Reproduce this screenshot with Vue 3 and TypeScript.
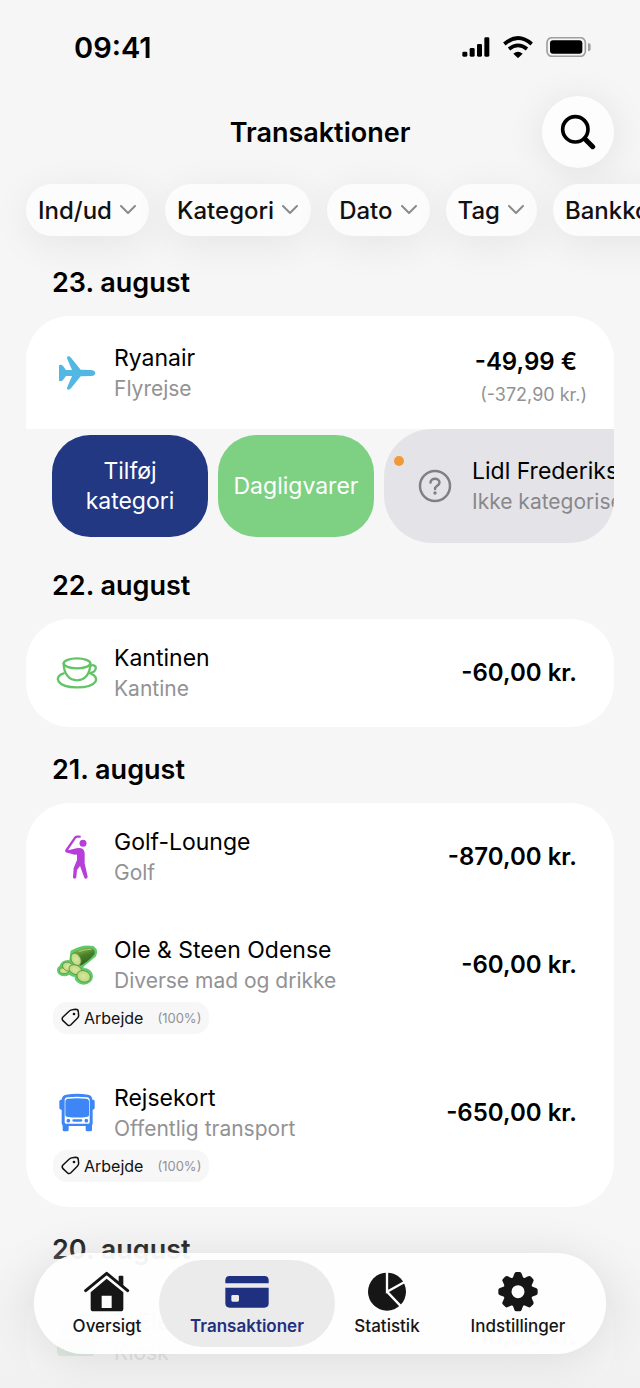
<script setup lang="ts">
import { ref } from 'vue'

type IconName = 'plane' | 'cup' | 'golf' | 'cucumber' | 'bus' | 'kiosk'
type TabId = 'home' | 'card' | 'pie' | 'gear'

interface Tag {
  name: string
  share: string
}

interface Transaction {
  id: number
  icon: IconName
  title: string
  category: string
  amount: string
  converted?: string
  tag?: Tag
}

interface DayGroup {
  date: string
  items: Transaction[]
  swiped?: { title: string; category: string; actions: { label: string; kind: string }[] }
}

const filters: string[] = ['Ind/ud', 'Kategori', 'Dato', 'Tag', 'Bankkonto']

const groups: DayGroup[] = [
  {
    date: '23. august',
    items: [
      { id: 1, icon: 'plane', title: 'Ryanair', category: 'Flyrejse', amount: '-49,99 €', converted: '(-372,90 kr.)' },
    ],
    swiped: {
      title: 'Lidl Frederiksberg',
      category: 'Ikke kategoriseret',
      actions: [
        { label: 'Tilføj kategori', kind: 'add' },
        { label: 'Dagligvarer', kind: 'suggest' },
      ],
    },
  },
  {
    date: '22. august',
    items: [{ id: 2, icon: 'cup', title: 'Kantinen', category: 'Kantine', amount: '-60,00 kr.' }],
  },
  {
    date: '21. august',
    items: [
      { id: 3, icon: 'golf', title: 'Golf-Lounge', category: 'Golf', amount: '-870,00 kr.' },
      {
        id: 4,
        icon: 'cucumber',
        title: 'Ole & Steen Odense',
        category: 'Diverse mad og drikke',
        amount: '-60,00 kr.',
        tag: { name: 'Arbejde', share: '(100%)' },
      },
      {
        id: 5,
        icon: 'bus',
        title: 'Rejsekort',
        category: 'Offentlig transport',
        amount: '-650,00 kr.',
        tag: { name: 'Arbejde', share: '(100%)' },
      },
    ],
  },
  {
    date: '20. august',
    items: [{ id: 6, icon: 'kiosk', title: '7-Eleven', category: 'Kiosk', amount: '-10,00 kr.' }],
  },
]

const tabs: { id: TabId; label: string }[] = [
  { id: 'home', label: 'Oversigt' },
  { id: 'card', label: 'Transaktioner' },
  { id: 'pie', label: 'Statistik' },
  { id: 'gear', label: 'Indstillinger' },
]

const activeTab = ref<TabId>('card')
const toothAngles: number[] = [0, 45, 90, 135, 180, 225, 270, 315]
</script>

<template>
  <div class="screen">
    <div class="status">
      <span class="clock">09:41</span>
      <div class="status-icons">
        <svg width="28" height="20" viewBox="0 0 84 60" aria-hidden="true">
          <rect x="1" y="44" width="15" height="15" rx="4" />
          <rect x="23" y="33" width="15" height="26" rx="4" />
          <rect x="45" y="21" width="15" height="38" rx="4" />
          <rect x="67" y="1" width="15" height="58" rx="4" />
        </svg>
        <svg width="30" height="22" viewBox="0 0 90 66" aria-hidden="true">
          <path d="M4 24Q45 -12 86 24" fill="none" stroke="#000" stroke-width="11" />
          <path d="M18 39Q45 17 72 39" fill="none" stroke="#000" stroke-width="11" />
          <path d="M31 53Q45 41 59 53L48 64Q45 67 42 64Z" />
        </svg>
        <svg width="46" height="20" viewBox="0 0 138 60" aria-hidden="true">
          <rect x="3" y="2" width="115" height="56" rx="15" fill="none" stroke="#a0a0a0" stroke-width="5" />
          <rect x="12" y="10" width="97" height="40" rx="9" />
          <path d="M126 19H129Q134 19 134 25V36Q134 42 129 42H126Z" fill="#a0a0a0" />
        </svg>
      </div>
    </div>

    <header class="header">
      <h1>Transaktioner</h1>
      <button class="search" type="button" aria-label="Søg">
        <svg width="36" height="36" viewBox="0 0 108 108" fill="none" stroke="#000" stroke-linecap="round">
          <circle cx="46" cy="46" r="38" stroke-width="11" />
          <path d="M75 75L98 98" stroke-width="15" />
        </svg>
      </button>
    </header>

    <nav class="filters" aria-label="Filtre">
      <button v-for="name in filters" :key="name" class="chip" type="button" aria-haspopup="listbox">
        {{ name }}
        <svg width="16" height="10" viewBox="0 0 16 10" aria-hidden="true">
          <path d="M1 1L8 8L15 1" fill="none" stroke="#8b8b8e" stroke-width="2" stroke-linecap="round" stroke-linejoin="round" />
        </svg>
      </button>
    </nav>

    <main class="list">
      <section v-for="group in groups" :key="group.date">
        <h2>{{ group.date }}</h2>
        <div class="card">
          <article v-for="item in group.items" :key="item.id" class="row" :class="{ tall: item.converted }">
            <div class="line">
              <span class="icon">
                <svg v-if="item.icon === 'plane'" width="38" height="36" viewBox="177 313 114 108">
                  <path
                    fill="#53b7e3"
                    d="M180 346Q180 342 184 342Q189 342 192 346L201 358H219L204 323Q203 317 208 317Q213 317 216 321L245 357L277 358Q289 360 289 367Q289 375 277 376L245 377L216 413Q213 417 208 417Q203 417 204 411L219 376H201L192 388Q189 392 184 392Q180 392 180 388Z"
                  />
                </svg>
                <svg
                  v-else-if="item.icon === 'cup'"
                  width="44"
                  height="34"
                  viewBox="44 79 132 102"
                  fill="none"
                  stroke="#62c466"
                  stroke-width="7"
                  stroke-linecap="round"
                >
                  <ellipse cx="110" cy="101" rx="40" ry="15" />
                  <path d="M70 101C70 135 88 152 110 152C132 152 150 135 150 101" />
                  <path d="M151 108C160 104 168 109 166 117C165 126 155 131 146 130" />
                  <path d="M70 131C40 139 46 173 110 173C174 173 178 142 153 133" />
                </svg>
                <svg v-else-if="item.icon === 'golf'" width="26" height="46" viewBox="73 614 78 138" fill="#b63fd9">
                  <circle cx="130" cy="642" r="10.500" />
                  <path d="M120 622H112L107 624L81 662" fill="none" stroke="#b63fd9" stroke-width="7" stroke-linecap="round" stroke-linejoin="round" />
                  <path d="M81 665L104 671" fill="none" stroke="#b63fd9" stroke-width="9" stroke-linecap="round" />
                  <path d="M86 663L110 657Q134 653 135 672V702L144 742Q144 748 138 748Q135 748 134 745L121 710L112 722L110 744Q109 748 105 748Q100 748 100 743L102 716L112 692V676L98 674Z" />
                </svg>
                <svg v-else-if="item.icon === 'cucumber'" width="46" height="44" viewBox="42 70 138 132">
                  <defs>
                    <linearGradient id="peel" x1="0.3" y1="0" x2="0.7" y2="1">
                      <stop offset="0" stop-color="#8cbd52" />
                      <stop offset="0.45" stop-color="#4a7f2a" />
                      <stop offset="1" stop-color="#2f5c1a" />
                    </linearGradient>
                    <radialGradient id="flesh">
                      <stop offset="0" stop-color="#d8e8a6" />
                      <stop offset="0.8" stop-color="#c1db86" />
                      <stop offset="1" stop-color="#96bf58" />
                    </radialGradient>
                  </defs>
                  <g fill="#5fca6e" stroke="#5fca6e" stroke-width="14" stroke-linejoin="round">
                    <path d="M98 98Q130 80 158 86Q168 94 162 106L126 136L94 132Z" />
                    <ellipse cx="73" cy="152" rx="15" ry="11" />
                    <ellipse cx="84" cy="140" rx="17" ry="12" />
                    <ellipse cx="106" cy="150" rx="19" ry="15" />
                    <ellipse cx="131" cy="170" rx="21" ry="18" />
                  </g>
                  <path d="M97 101Q122 82 153 84Q168 90 163 104Q150 122 122 138Z" fill="url(#peel)" />
                  <path d="M116 96Q138 87 155 89" fill="none" stroke="#9cc566" stroke-width="4" />
                  <ellipse cx="108" cy="119" rx="14" ry="20" transform="rotate(-28 108 119)" fill="url(#flesh)" stroke="#5d9235" stroke-width="2" />
                  <g fill="url(#flesh)" stroke="#5d9235" stroke-width="2">
                    <ellipse cx="72" cy="153" rx="14" ry="9" />
                    <ellipse cx="84" cy="141" rx="17" ry="13" transform="rotate(22 84 141)" />
                    <ellipse cx="106" cy="150" rx="20" ry="14" transform="rotate(22 106 150)" />
                    <ellipse cx="131" cy="170" rx="21" ry="17" transform="rotate(22 131 170)" />
                  </g>
                </svg>
                <svg v-else-if="item.icon === 'bus'" width="38" height="40" viewBox="51 523 114 120" fill="#3e86f5">
                  <path
                    fill-rule="evenodd"
                    d="M76 528Q108 523 141 528Q153 530 154 542V543H157Q161 544 161 548V568Q161 572 156 573H155V613Q155 618 153 620V633Q153 638 148 638H139Q134 638 134 633V622H83V633Q83 638 78 638H69Q65 638 65 633V620Q62 618 62 613V573H60Q55 572 55 568V548Q55 544 60 543H62V542Q63 530 76 528ZM79 536Q71 537 71 545V611Q71 615 75 615H142Q146 615 146 611V545Q146 537 138 536Q108 532 79 536Z"
                  />
                  <path d="M81 540Q108 537 136 540Q144 541 144 549V589Q144 593 140 594Q108 599 77 594Q73 593 73 589V549Q73 541 81 540Z" />
                  <circle cx="82" cy="606" r="5.500" />
                  <circle cx="136" cy="606" r="5.500" />
                  <rect x="94" y="602" width="30" height="7" rx="3.500" />
                </svg>
                <svg v-else width="42" height="42" viewBox="0 0 42 42">
                  <path d="M6 20L14 7Q21 0 28 7L38 22" fill="none" stroke="#6fdc96" stroke-width="6" />
                  <rect x="1" y="22" width="38" height="18" rx="4" fill="#7fc795" />
                </svg>
              </span>
              <div class="text">
                <h3>{{ item.title }}</h3>
                <p>{{ item.category }}</p>
              </div>
              <div class="sum">
                <strong>{{ item.amount }}</strong>
                <small v-if="item.converted">{{ item.converted }}</small>
              </div>
            </div>
            <div v-if="item.tag" class="tag">
              <svg width="20" height="20" viewBox="58 266 60 60" aria-hidden="true">
                <path
                  d="M67 293L86 275Q90 271 95 271L105 270Q113 270 113 278L114 288Q114 293 110 297L90 317Q85 321 80 316L67 304Q62 298 67 293Z"
                  fill="none"
                  stroke="#111"
                  stroke-width="4.500"
                />
                <circle cx="100" cy="284" r="4" fill="#111" />
              </svg>
              <span>{{ item.tag.name }}</span>
              <small>{{ item.tag.share }}</small>
            </div>
          </article>

          <div v-if="group.swiped" class="swipe">
            <button
              v-for="action in group.swiped.actions"
              :key="action.kind"
              type="button"
              class="action"
              :class="action.kind"
            >
              {{ action.label }}
            </button>
            <article class="pulled">
              <i class="dot"></i>
              <span class="icon">
                <svg width="34" height="34" viewBox="0 0 34 34" fill="none" stroke="#808084">
                  <circle cx="17" cy="17" r="15" stroke-width="2.500" />
                  <path d="M12.500 13.500C12.500 8.500 21.500 8.500 21.500 13.500C21.500 17 17 16.500 17 20" stroke-width="2.500" stroke-linecap="round" />
                  <circle cx="17" cy="24" r="1.700" fill="#808084" stroke="none" />
                </svg>
              </span>
              <div class="text">
                <h3>{{ group.swiped.title }}</h3>
                <p>{{ group.swiped.category }}</p>
              </div>
            </article>
          </div>
        </div>
      </section>
    </main>

    <div class="fade"></div>

    <nav class="tabbar" aria-label="Hovedmenu">
      <button
        v-for="tab in tabs"
        :key="tab.id"
        type="button"
        class="tab"
        :class="{ active: tab.id === activeTab }"
        @click="activeTab = tab.id"
      >
        <svg v-if="tab.id === 'home'" width="46" height="42" viewBox="252 184 138 126" fill="currentColor">
          <path d="M257 243L320 191L383 243" fill="none" stroke="currentColor" stroke-width="9" stroke-linecap="round" stroke-linejoin="round" />
          <path d="M356 201Q356 198 359 198H367Q370 198 370 201V233L356 221Z" />
          <path fill-rule="evenodd" d="M320 207L370 248V297Q370 305 362 305H280Q272 305 272 297V248ZM305 258V295H335V258Z" />
        </svg>
        <svg v-else-if="tab.id === 'card'" width="46" height="42" viewBox="674 183 138 126" fill="currentColor">
          <path d="M678 220V211Q678 198 691 198H795Q808 198 808 211V220Z" />
          <path
            fill-rule="evenodd"
            d="M678 233H808V280Q808 293 795 293H691Q678 293 678 280ZM700 255Q696 255 696 259V271Q696 275 700 275H715Q719 275 719 271V259Q719 255 715 255Z"
          />
        </svg>
        <svg v-else-if="tab.id === 'pie'" width="46" height="42" viewBox="-69 -62 138 126">
          <circle r="57" fill="currentColor" />
          <path d="M0 -60V0L54 -30M0 0L42 44" fill="none" stroke="#fdfdfd" stroke-width="7" />
        </svg>
        <svg v-else width="46" height="42" viewBox="-69 -62 138 126" fill="currentColor">
          <circle r="32" fill="none" stroke="currentColor" stroke-width="25" />
          <path
            v-for="angle in toothAngles"
            :key="angle"
            :transform="`rotate(${angle})`"
            d="M-17 -38L-11 -54Q-10 -59 -5 -59H5Q10 -59 11 -54L17 -38Z"
          />
        </svg>
        <span>{{ tab.label }}</span>
      </button>
    </nav>
  </div>
</template>

<style>
body {
  margin: 0;
  background: #f6f6f6;
}
</style>

<style scoped>
.screen {
  position: relative;
  height: 100vh;
  overflow: hidden;
  background: #f6f6f6;
  color: #000;
  font-family: Inter, 'Liberation Sans', sans-serif;
}

h1,
h2,
h3,
p {
  margin: 0;
}

button {
  border: 0;
  padding: 0;
  font-family: inherit;
  cursor: pointer;
}

svg {
  display: block;
  flex: none;
}

.status {
  display: flex;
  align-items: center;
  justify-content: space-between;
  height: 96px;
  padding: 0 48px 2px 74px;
  box-sizing: border-box;
}

.clock {
  font-size: 29px;
  font-weight: 600;
}

.status-icons {
  display: flex;
  align-items: center;
  gap: 13px;
}

.header {
  display: grid;
  grid-template-columns: 72px 1fr 72px;
  align-items: center;
  padding: 0 26px;
}

.header h1 {
  grid-column: 2;
  text-align: center;
  font-size: 27px;
  font-weight: 600;
}

.search {
  display: flex;
  align-items: center;
  justify-content: center;
  width: 72px;
  height: 72px;
  border-radius: 50%;
  background: #fdfdfd;
  box-shadow: 0 4px 40px rgba(0, 0, 0, 0.09);
}

.filters {
  display: flex;
  gap: 16px;
  padding: 16px 0 4px 26px;
}

.chip {
  display: flex;
  flex: none;
  align-items: center;
  gap: 8px;
  height: 52px;
  padding: 0 13px 0 12px;
  border-radius: 26px;
  background: #fcfcfc;
  box-shadow: 0 8px 40px rgba(0, 0, 0, 0.07);
  color: #111;
  font-size: 24px;
  font-weight: 500;
  white-space: nowrap;
}

.list {
  padding: 0 26px;
}

h2 {
  padding: 26px 26px 16px;
  font-size: 27px;
  font-weight: 600;
  line-height: 34px;
}

.card {
  overflow: hidden;
  border-radius: 44px;
}

.row {
  padding: 23px 27px;
  background: #fff;
}

.row.tall {
  padding: 18px 27px 17px;
}

.line {
  display: flex;
  align-items: center;
}

.icon {
  display: flex;
  flex: none;
  align-items: center;
  justify-content: center;
  width: 48px;
  margin-right: 13px;
}

.text {
  flex: 1;
  white-space: nowrap;
}

h3 {
  font-size: 23px;
  font-weight: 400;
  line-height: 32px;
}

.text p {
  color: #929294;
  font-size: 21px;
  line-height: 30px;
}

.sum {
  display: flex;
  flex-direction: column;
  align-items: flex-end;
}

.sum strong {
  margin-right: 10px;
  font-size: 24px;
  font-weight: 600;
  line-height: 32px;
}

.tall .sum strong {
  padding-top: 12px;
}

.sum small {
  color: #929294;
  font-size: 18px;
  line-height: 34px;
}

.tag {
  display: flex;
  align-items: center;
  width: fit-content;
  height: 32px;
  margin: 6px 0 2px;
  padding: 0 8px 0 7px;
  border-radius: 14px;
  background: #f7f7f7;
  color: #111;
  font-size: 16px;
}

.tag span {
  margin: 0 14px 0 4px;
}

.tag small {
  color: #929294;
  font-size: 13px;
}

.swipe {
  display: flex;
  gap: 10px;
  align-items: center;
  height: 114px;
  padding-left: 26px;
}

.action {
  flex: none;
  width: 156px;
  height: 102px;
  padding: 0 24px;
  border-radius: 38px;
  color: #fff;
  font-size: 23px;
  line-height: 30px;
}

.action.add {
  background: #223883;
}

.action.suggest {
  padding: 0;
  background: #7ed083;
}

.pulled {
  position: relative;
  display: flex;
  flex: none;
  align-items: center;
  box-sizing: border-box;
  width: 100%;
  height: 114px;
  padding: 0 27px;
  border-radius: 48px;
  background: #e4e4e8;
}

.pulled p {
  color: #88888c;
}

.dot {
  position: absolute;
  top: 27px;
  left: 10px;
  width: 10px;
  height: 10px;
  border-radius: 50%;
  background: #f09a37;
}

.fade {
  position: absolute;
  right: 0;
  bottom: 0;
  left: 0;
  height: 168px;
  background: linear-gradient(rgba(244, 244, 244, 0), rgba(243, 243, 243, 0.25) 20%, rgba(241, 241, 241, 0.8) 50%, rgba(241, 241, 241, 0.82) 86%, #f1f1f1);
}

.tabbar {
  position: absolute;
  right: 34px;
  bottom: 34px;
  left: 34px;
  display: grid;
  grid-template-columns: 134fr 146fr 134fr 128fr;
  padding: 7px 24px 7px 6px;
  border-radius: 51px;
  background: rgba(254, 254, 254, 0.94);
  box-shadow: 0 4px 48px rgba(0, 0, 0, 0.1);
}

.tab {
  position: relative;
  display: flex;
  flex-direction: column;
  align-items: center;
  height: 87px;
  padding-top: 11px;
  box-sizing: border-box;
  background: none;
  color: #161616;
  font-size: 17px;
  font-weight: 500;
  line-height: 26px;
}

.tab svg,
.tab span {
  position: relative;
}

.tab.active {
  color: #1f3080;
  font-weight: 600;
}

.tab.active::before {
  position: absolute;
  inset: 0 -15px;
  border-radius: 44px;
  background: #ebebeb;
  content: '';
}
</style>
